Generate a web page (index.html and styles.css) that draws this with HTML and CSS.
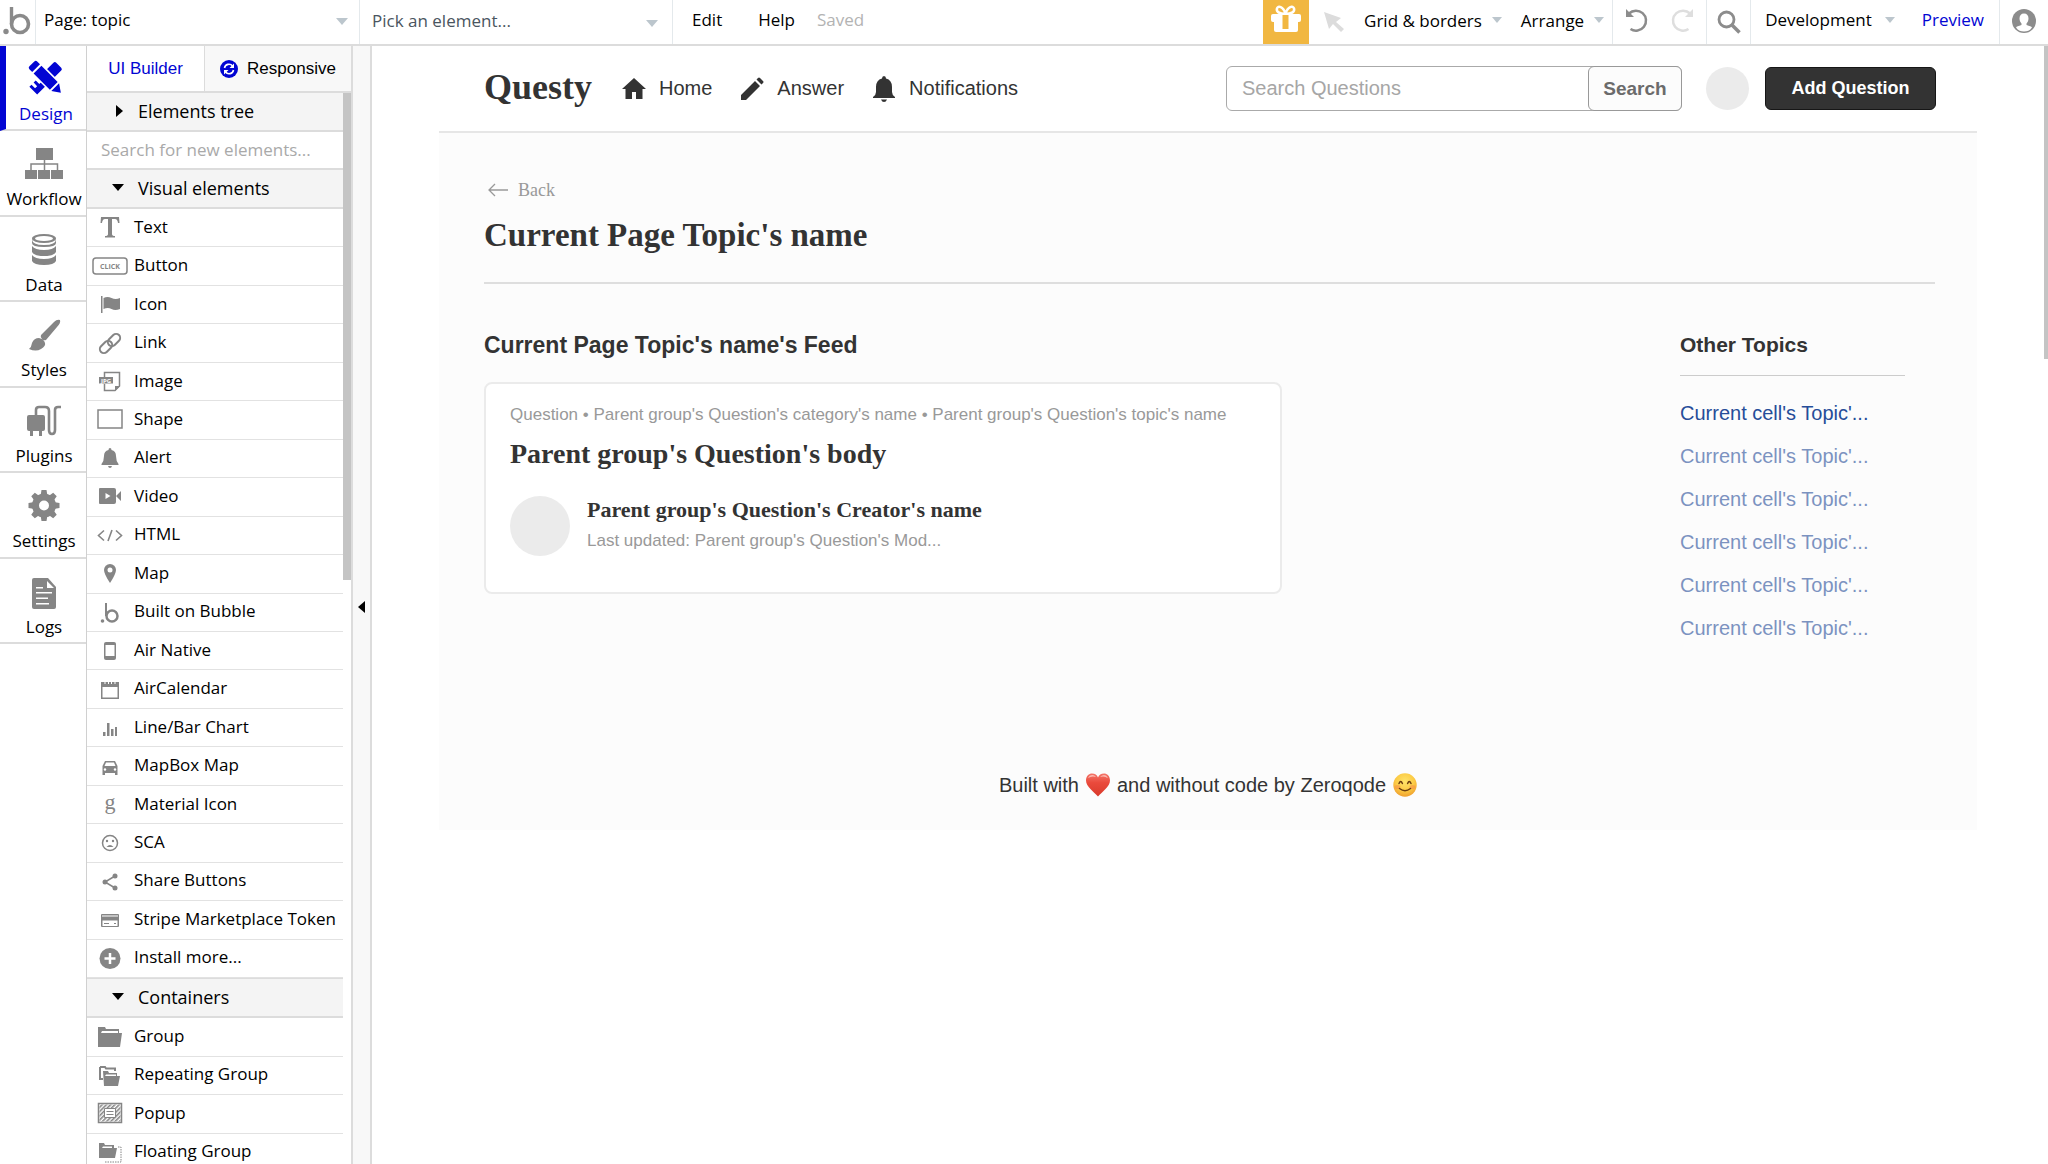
FILE: index.html
```html
<!DOCTYPE html>
<html lang="en">
<head>
    <meta charset="UTF-8">
    <meta name="viewport" content="width=device-width, initial-scale=1.0">
    <title>Page: topic</title>
    <link rel="stylesheet" href="styles.css">
</head>
<body>
    <header class="topbar">
        <a href="#" class="logo" aria-label="Bubble">
            <svg width="28" height="30" viewBox="0 0 28 30"><path d="M8.500 2v17" stroke="#8a8a8a" stroke-width="3.400" fill="none"/><circle cx="17" cy="19" r="8.500" fill="none" stroke="#8a8a8a" stroke-width="3.600"/><circle cx="3" cy="26.500" r="2.700" fill="#8a8a8a"/></svg>
        </a>
        <div class="picker page-picker">
            <select aria-label="Page"><option>Page: topic</option></select>
        </div>
        <div class="picker element-picker">
            <select aria-label="Element"><option>Pick an element...</option></select>
        </div>
        <nav class="menu">
            <button type="button">Edit</button>
            <button type="button">Help</button>
            <span class="saved">Saved</span>
        </nav>
        <button type="button" class="gift" aria-label="Gifts">
            <svg width="32" height="28" viewBox="0 0 32 28"><path d="M15.500 9C9 9 6 6.500 7 3.500s6-2.500 8.500 5C18 1 23 .500 24 3.500S22 9 15.500 9" fill="none" stroke="#fff" stroke-width="2.500"/><rect x="1" y="9" width="30" height="8" rx="2" fill="#fff"/><path d="M4 16h24v9q0 2-2 2H6q-2 0-2-2z" fill="#fff"/><path d="M12.500 10h6v14h-6z" fill="#f1b741"/></svg>
        </button>
        <button type="button" class="pointer" aria-label="Select">
            <svg width="22" height="22" viewBox="0 0 22 22"><path d="M1 1l17 6-5 4 8 7-3 3-8-8-4 5z" fill="#dcdcdc"/></svg>
        </button>
        <button type="button" class="drop grid-menu">Grid &amp; borders</button>
        <button type="button" class="drop arrange-menu">Arrange</button>
        <div class="history">
            <button type="button" aria-label="Undo">
                <svg width="24" height="24" viewBox="0 0 24 24"><path d="M4 5.500A10 10 0 1 1 5.500 21" fill="none" stroke="#8c8c8c" stroke-width="2.500"/><path d="M1 1v8h8z" fill="#8c8c8c"/></svg>
            </button>
            <button type="button" aria-label="Redo">
                <svg width="24" height="24" viewBox="0 0 24 24"><path d="M20 5.500A10 10 0 1 0 18.500 21" fill="none" stroke="#dedede" stroke-width="2.500"/><path d="M23 1v8h-8z" fill="#dedede"/></svg>
            </button>
        </div>
        <button type="button" class="find" aria-label="Search">
            <svg width="24" height="24" viewBox="0 0 24 24"><circle cx="9.500" cy="9.500" r="7.500" fill="none" stroke="#8c8c8c" stroke-width="2.800"/><path d="M15 15l7.500 7.500" stroke="#8c8c8c" stroke-width="3.500"/></svg>
        </button>
        <div class="deploy">
            <button type="button" class="drop">Development</button>
            <a href="#">Preview</a>
        </div>
        <a href="#" class="account" aria-label="Account">
            <svg width="24" height="24" viewBox="0 0 24 24"><circle cx="12" cy="12" r="12" fill="#8c8c8c"/><path d="M12 4.500c3 0 4.500 2 4.500 5 0 2-1 4-2 5v1.500c3 1 5 1.500 5.500 2.500-2 3-5 4-8 4s-6-1-8-4c.500-1 2.500-1.500 5.500-2.500v-1.500c-1-1-2-3-2-5 0-3 1.500-5 4.500-5z" fill="#fff"/></svg>
        </a>
    </header>

    <div class="workspace">
        <nav class="rail">
            <a href="#" class="active">
                <svg width="36" height="36" viewBox="0 0 36 36"><g fill="#0205d3"><path transform="rotate(45 18 18)" d="M12.500 2q0-2 2-2h7q2 0 2 2v34h-11v-3h5v-3h-5v-3h5v-3h-5z"/><path transform="rotate(-45 18 18)" d="M11 5h14v25H11z" fill="#fff"/><path transform="rotate(-45 18 18)" d="M12.500 6h11v23h-11zM12.500 31h11L18 39zM12.500 0q0-2 2-2h7q2 0 2 2v4h-11z"/></g></svg>
                Design
            </a>
            <a href="#">
                <svg width="38" height="36" viewBox="0 0 38 36"><path d="M11 3h17v12H11zM0 25h12v9H0zM13 25h12v9H13zM26 25h12v9H26z" fill="#858585"/><path d="M19.500 15v10M6 25v-6h26.500v6" fill="none" stroke="#858585" stroke-width="1.500"/></svg>
                Workflow
            </a>
            <a href="#">
                <svg width="26" height="36" viewBox="0 0 26 36"><g fill="#858585"><path d="M1 8q0 6 12 6t12-6v4q0 4-12 4T1 12z"/><ellipse cx="13" cy="7.500" rx="12" ry="4.500"/><path d="M1 15q3 4 12 4t12-4v6q-2 4-12 4T1 21zM1 24q3 4 12 4t12-4v6q-2 4-12 4T1 30z"/></g><ellipse cx="13" cy="7.500" rx="9" ry="2.500" fill="#fff"/></svg>
                Data
            </a>
            <a href="#">
                <svg width="34" height="36" viewBox="0 0 34 36"><path d="M33 4q-3-1-6 2L14 19q-1 2 1 4t4 1L30 11q4-4 3-7zM12 22q-5 0-7 5-.500 4-3 6 7 3 12 0 5-3 4-6-1-4-6-5z" fill="#858585"/></svg>
                Styles
            </a>
            <a href="#">
                <svg width="36" height="36" viewBox="0 0 36 36"><path d="M3 13h14q2 0 2 2v12q0 2-2 2h-1v5h-3v-5H7v5H4v-5H3q-2 0-2-2V15q0-2 2-2z" fill="#858585"/><path d="M10 14V8q0-3 3-3h6q4 0 4 4v19q0 4 3 4t3-4V8q0-3 3-3h3" fill="none" stroke="#858585" stroke-width="2.600"/></svg>
                Plugins
            </a>
            <a href="#">
                <svg width="32" height="36" viewBox="0 0 32 36"><g fill="#858585"><path d="M12.500 9l1-6h5l1 6zM12.500 28l1 6h5l1-6z"/><path d="M12.500 9l1-6h5l1 6zM12.500 28l1 6h5l1-6z" transform="rotate(45 16 18.500)"/><path d="M12.500 9l1-6h5l1 6zM12.500 28l1 6h5l1-6z" transform="rotate(90 16 18.500)"/><path d="M12.500 9l1-6h5l1 6zM12.500 28l1 6h5l1-6z" transform="rotate(135 16 18.500)"/></g><circle cx="16" cy="18.500" r="8.500" fill="none" stroke="#858585" stroke-width="7"/></svg>
                Settings
            </a>
            <a href="#">
                <svg width="24" height="36" viewBox="0 0 24 36"><path d="M2 5h14l8 9v20q0 2-2 2H2q-2 0-2-2V7q0-2 2-2z" fill="#858585"/><path d="M15 8v7h7zM4 14h7v1.500H4zM4 19h16v1.500H4zM4 24.500h12V26H4zM4 30h13v1.500H4z" fill="#fff"/></svg>
                Logs
            </a>
        </nav>

        <aside class="panel">
            <div class="tabs">
                <button type="button" class="tab active">UI Builder</button>
                <button type="button" class="tab">
                    <svg width="18" height="18" viewBox="0 0 18 18"><circle cx="9" cy="9" r="9" fill="#0205d3"/><path d="M4.500 8a4.500 4.500 0 0 1 8-2M13.500 10a4.500 4.500 0 0 1-8 2" fill="none" stroke="#fff" stroke-width="1.600"/><path d="M14 3.500V8H9.500zM4 14.500V10h4.500z" fill="#fff"/></svg>
                    Responsive
                </button>
            </div>
            <div class="panel-body">
                <div class="palette">
                    <button type="button" class="section closed">Elements tree</button>
                    <input type="text" class="element-search" placeholder="Search for new elements..." aria-label="Search for new elements">
                    <button type="button" class="section">Visual elements</button>
                    <ul class="visual-list">
                        <li><svg viewBox="0 0 36 24"><path d="M9 2h18l.500 6h-1.500q-.500-4-3-4h-3v15q0 2 3 2v1.500H13V21q3 0 3-2V4h-3q-2.500 0-3 4H8.500z"/></svg>Text</li>
                        <li><svg viewBox="0 0 36 24"><rect x="1" y="4" width="34" height="16" rx="3" fill="#fff" stroke="#858585" stroke-width="1.500"/><text x="18" y="15" class="click">CLICK</text></svg>Button</li>
                        <li><svg viewBox="0 0 36 24"><path d="M9 4h1.500v17H9zM11.500 6q4-2 8 0t8.500 0v11q-5 2-8.500 0t-8 0z"/></svg>Icon</li>
                        <li><svg viewBox="0 0 36 24"><g fill="none" stroke="#858585" stroke-width="2"><rect x="-7" y="-4" width="14" height="8" rx="4" transform="translate(22 9) rotate(-45)"/><rect x="-7" y="-4" width="14" height="8" rx="4" transform="translate(14 16) rotate(-45)"/></g></svg>Link</li>
                        <li><svg viewBox="0 0 36 24"><path d="M12.500 8V3.500h15V17L23 21.500H12.500V15" fill="none" stroke="#858585" stroke-width="1.500"/><path d="M23 22v-5h5zM7 8h14v6.500H7z"/><text x="14" y="13.500" class="jpg">JPG</text></svg>Image</li>
                        <li><svg viewBox="0 0 36 24"><rect x="6" y="3" width="24" height="18" fill="#fff" stroke="#858585" stroke-width="1.500"/></svg>Shape</li>
                        <li><svg viewBox="0 0 36 24"><path d="M18 2q1.500 0 1.500 2 4.500 1 4.500 6 0 5 2.500 8v1h-17v-1q2.500-3 2.500-8 0-5 4.500-6 0-2 1.500-2zM16 20h4q-.500 2-2 2t-2-2z"/></svg>Alert</li>
                        <li><svg viewBox="0 0 36 24"><path d="M8 4h14q2 0 2 2v12q0 2-2 2H8q-1 0-1-1V5q0-1 1-1zM24 12l5-5v10z"/><path d="M13.500 9v6l5-3z" fill="#fff"/></svg>Video</li>
                        <li><svg viewBox="0 0 36 24"><path d="M12 7.500L6.500 12.500l5.500 5M24 7.500l5.500 5-5.500 5M20 7l-4 11" fill="none" stroke="#858585" stroke-width="1.600"/></svg>HTML</li>
                        <li><svg viewBox="0 0 36 24"><path d="M18 3a6 6 0 0 1 6 6q0 4-6 13-6-9-6-13a6 6 0 0 1 6-6z"/><circle cx="18" cy="9" r="2.500" fill="#fff"/></svg>Map</li>
                        <li><svg viewBox="0 0 36 24"><path d="M14 3v13" stroke="#858585" stroke-width="2"/><circle cx="20" cy="16" r="5.500" fill="none" stroke="#858585" stroke-width="2.500"/><circle cx="10.500" cy="21" r="1.800"/></svg>Built on Bubble</li>
                        <li><svg viewBox="0 0 36 24"><path d="M14 4h8q2 0 2 2v14q0 2-2 2h-8q-2 0-2-2V6q0-2 2-2z"/><path d="M13.500 7h9v11h-9z" fill="#fff"/></svg>Air Native</li>
                        <li><svg viewBox="0 0 36 24"><path d="M9 5h18v17H9z"/><path d="M10.500 10h15v10.500h-15z" fill="#fff"/><path d="M13 4v3M23 4v3M16.500 4v3M19.500 4v3" stroke="#fff" stroke-width="1"/></svg>AirCalendar</li>
                        <li><svg viewBox="0 0 36 24"><path d="M11 17h2.500v4H11zM15 8h2.500v13H15zM19 14h2.500v7H19zM23 12h2v9h-2z"/></svg>Line/Bar Chart</li>
                        <li><svg viewBox="0 0 36 24"><path d="M13 7h10l2.500 5v9H23v-2H13v2h-2.500v-9z"/><path d="M14 8.500h8l1.500 3.500h-11z" fill="#fff"/><circle cx="13" cy="15.500" r="1.200" fill="#fff"/><circle cx="23" cy="15.500" r="1.200" fill="#fff"/></svg>MapBox Map</li>
                        <li><svg viewBox="0 0 36 24"><text x="18" y="17" class="letter-g">g</text></svg>Material Icon</li>
                        <li><svg viewBox="0 0 36 24"><circle cx="18" cy="13" r="7.500" fill="none" stroke="#858585" stroke-width="1.500"/><circle cx="15" cy="11" r="1.200"/><circle cx="21" cy="11" r="1.200"/><path d="M14.500 17q3.500-4 7 0z"/></svg>SCA</li>
                        <li><svg viewBox="0 0 36 24"><path d="M23 7l-10 6 10 6" fill="none" stroke="#858585" stroke-width="1.500"/><circle cx="23" cy="7" r="2.500"/><circle cx="13" cy="13" r="2.500"/><circle cx="23" cy="19" r="2.500"/></svg>Share Buttons</li>
                        <li><svg viewBox="0 0 36 24"><rect x="9" y="7" width="18" height="13" rx="1"/><path d="M10 8.500h16V9.500H10zM10.500 13.500h15V19h-15z" fill="#fff"/><path d="M12 16h5v1h-5zM22 16h2v1h-2z"/></svg>Stripe Marketplace Token</li>
                        <li><svg viewBox="0 0 36 24"><circle cx="18" cy="12.500" r="10.500"/><path d="M18 7v11M12.500 12.500h11" stroke="#fff" stroke-width="2.500"/></svg>Install more...</li>
                    </ul>
                    <button type="button" class="section">Containers</button>
                    <ul class="container-list">
                        <li><svg viewBox="0 0 36 24"><path d="M6 3h7l1 2h13v4h3l-2 14H6z"/><path d="M9 9l1-2h16v2z" fill="#fff"/></svg>Group</li>
                        <li><svg viewBox="0 0 36 24"><path d="M8 4h5l1 1.500h9V8M8 4v12h3" fill="none" stroke="#858585" stroke-width="2"/><path d="M11 8h5l1 2h8v3h3l-2 10H12z"/><path d="M13 13l1-1.500h10V13z" fill="#fff"/></svg>Repeating Group</li>
                        <li><svg viewBox="0 0 36 24"><defs><pattern id="hatch" width="3" height="3" patternUnits="userSpaceOnUse" patternTransform="rotate(45)"><path d="M0 0h1.600v3H0z" fill="#858585"/></pattern></defs><rect x="6.500" y="2.500" width="23" height="19" fill="#fff" stroke="#858585" stroke-width="1.500"/><rect x="7.500" y="3.500" width="21" height="17" fill="url(#hatch)"/><path d="M12.500 7.500h11v9h-11z" fill="#fff" stroke="#858585"/><path d="M14.500 10.500h7M14.500 13.500h7" stroke="#858585"/></svg>Popup</li>
                        <li><svg viewBox="0 0 36 24"><path d="M7 3h5l1 2h9v3h3l-2 10H7z"/><path d="M10 8l1-1.500h9V8z" fill="#fff"/><path d="M26 7h3v15H13" fill="none" stroke="#858585" stroke-dasharray="1.500 1"/></svg>Floating Group</li>
                    </ul>
                </div>
                <div class="scrollbar"></div>
            </div>
        </aside>

        <button type="button" class="collapse" aria-label="Collapse panel"></button>

        <main class="canvas">
            <div class="page">
                <header class="site-header">
                    <a href="#" class="brand">Questy</a>
                    <nav class="site-nav">
                        <a href="#"><svg width="24" height="24" viewBox="0 0 24 24"><path d="M12 1l12 11h-3.500v10H14v-7h-4v7H3.500V12H0z"/></svg>Home</a>
                        <a href="#"><svg width="24" height="24" viewBox="0 0 24 24"><path d="M1 18L15 4l5 5L6 23H1zM16.500 2.500L18 1q1-1 2 0l3 3q1 1 0 2l-1.500 1.500z"/></svg>Answer</a>
                        <a href="#"><svg width="24" height="26" viewBox="0 0 24 26"><path d="M12 0q2 0 2 2.500 6 1.500 6 8.500v5q0 3 3 5v1H1v-1q3-2 3-5v-5q0-7 6-8.500Q10 0 12 0zM9 23.500h6q-1 2.500-3 2.500t-3-2.500z"/></svg>Notifications</a>
                    </nav>
                    <form class="site-search">
                        <input type="text" placeholder="Search Questions" aria-label="Search Questions">
                        <button type="button">Search</button>
                    </form>
                    <div class="avatar"></div>
                    <button type="button" class="add-question">Add Question</button>
                </header>

                <div class="content">
                    <a href="#" class="back"><svg width="20" height="12" viewBox="0 0 20 12"><path d="M20 6H1M7 0L1 6l6 6" fill="none" stroke="#999" stroke-width="1.300"/></svg>Back</a>
                    <h1>Current Page Topic's name</h1>
                    <div class="columns">
                        <section class="feed">
                            <h2>Current Page Topic's name's Feed</h2>
                            <article class="card">
                                <p class="meta">Question • Parent group's Question's category's name • Parent group's Question's topic's name</p>
                                <h3>Parent group's Question's body</h3>
                                <div class="author">
                                    <div class="avatar large"></div>
                                    <div>
                                        <h4>Parent group's Question's Creator's name</h4>
                                        <p class="meta">Last updated: Parent group's Question's Mod...</p>
                                    </div>
                                </div>
                            </article>
                        </section>
                        <aside class="topics">
                            <h2>Other Topics</h2>
                            <ul>
                                <li><a href="#">Current cell's Topic'...</a></li>
                                <li><a href="#">Current cell's Topic'...</a></li>
                                <li><a href="#">Current cell's Topic'...</a></li>
                                <li><a href="#">Current cell's Topic'...</a></li>
                                <li><a href="#">Current cell's Topic'...</a></li>
                                <li><a href="#">Current cell's Topic'...</a></li>
                            </ul>
                        </aside>
                    </div>
                </div>

                <footer class="site-footer">
                    Built with
                    <svg width="24" height="24" viewBox="0 0 24 24" role="img" aria-label="love"><defs><linearGradient id="heart" x1="0" y1="0" x2="0" y2="1"><stop offset="0" stop-color="#f4766a"/><stop offset=".4" stop-color="#ea4a3c"/><stop offset="1" stop-color="#d93a2b"/></linearGradient></defs><path d="M12 23.500C8 19 0 13.500 0 7.500 0 3 3 .500 6 .500c3 0 5 1.500 6 4 1-2.500 3-4 6-4s6 2.500 6 7c0 6-8 11.500-12 16z" fill="url(#heart)"/><path d="M2 5q1.500-3.500 5-3 2 .500 3 2-4-1.500-8 1zM14 4q3-3 6-1.500 1.500 1 2 2.500-4-2.500-8-1z" fill="#fbb8b0"/></svg>
                    and without code by Zeroqode
                    <svg width="24" height="24" viewBox="0 0 24 24" role="img" aria-label="smile"><defs><radialGradient id="face" cx=".5" cy=".35" r=".65"><stop offset="0" stop-color="#ffe46a"/><stop offset=".6" stop-color="#fccb45"/><stop offset="1" stop-color="#efa02f"/></radialGradient></defs><circle cx="12" cy="12" r="11.700" fill="url(#face)"/><ellipse cx="4.500" cy="14" rx="3" ry="2" fill="#f6934a" opacity=".6"/><ellipse cx="19.500" cy="14" rx="3" ry="2" fill="#f6934a" opacity=".6"/><path d="M6 10.500q1.700-4 3.400 0M14.600 10.500q1.700-4 3.400 0M6.500 15.500q5.500 4.500 11 0" fill="none" stroke="#6b3d10" stroke-width="1.500" stroke-linecap="round"/></svg>
                </footer>
            </div>
            <div class="canvas-scrollbar"></div>
        </main>
    </div>
</body>
</html>
```
FILE: styles.css
```css
* {
    box-sizing: border-box;
}
body {
    margin: 0;
    height: 100vh;
    overflow: hidden;
    display: flex;
    flex-direction: column;
    background: #fff;
    color: #000;
    font-family: "Open Sans", sans-serif;
    font-size: 17px;
}
a {
    color: inherit;
    text-decoration: none;
}
button, input, select {
    font: inherit;
    color: inherit;
    background: none;
    border: none;
    padding: 0;
    margin: 0;
    outline: none;
}
button {
    cursor: pointer;
}
ul {
    list-style: none;
    margin: 0;
    padding: 0;
}
h1, h2, h3, h4, p {
    margin: 0;
}
svg {
    display: block;
    flex: none;
    overflow: visible;
}

/* top bar */
.topbar {
    display: flex;
    flex: none;
    height: 46px;
    border-bottom: 2px solid #dcdcdc;
}
.topbar > * {
    display: flex;
    align-items: center;
}
.logo {
    width: 36px;
    padding: 0 0 4px 3px;
    border-right: 1px solid #e4e9ec;
}
.picker {
    position: relative;
    border-right: 1px solid #e4e9ec;
}
.picker select {
    appearance: none;
    width: 100%;
    height: 100%;
    padding: 0 32px 6px 8px;
}
.picker::after {
    content: "";
    position: absolute;
    right: 11px;
    top: 18px;
    border: 6px solid transparent;
    border-top: 7px solid #bcc6cd;
    border-bottom: none;
}
.page-picker {
    width: 324px;
}
.element-picker {
    width: 313px;
    color: #4a5560;
}
.element-picker select {
    padding-left: 12px;
    padding-bottom: 4px;
}
.element-picker::after {
    right: 14px;
    top: 20px;
}
.menu {
    flex: 1;
    gap: 36px;
    padding: 0 0 6px 19px;
}
.saved {
    margin-left: -14px;
    color: #b3b3b3;
}
.gift {
    width: 46px;
    justify-content: center;
    padding-bottom: 6px;
    background: #f1b741;
}
.pointer {
    width: 55px;
    justify-content: center;
    padding-right: 6px;
}
.drop {
    display: flex;
    align-items: center;
    gap: 10px;
    padding-bottom: 4px;
}
.drop::after {
    content: "";
    border: 5px solid transparent;
    border-top: 6px solid #bcc6cd;
    border-bottom: none;
}
.grid-menu {
    padding-right: 19px;
}
.arrange-menu {
    padding-right: 8px;
}
.history {
    gap: 21px;
    padding: 0 12px 4px;
    border-left: 1px solid #e4e9ec;
    border-right: 1px solid #e4e9ec;
}
.find {
    width: 44px;
    justify-content: center;
    border-right: 1px solid #e4e9ec;
}
.deploy {
    gap: 27px;
    padding: 0 15px 5px 14px;
    border-right: 1px solid #e4e9ec;
}
.deploy .drop {
    gap: 13px;
    padding-bottom: 0;
}
.deploy a {
    color: #0205d3;
}
.account {
    width: 48px;
    padding: 0 0 2px 12px;
}

.workspace {
    flex: 1;
    display: flex;
    min-height: 0;
}

/* main section rail */
.rail {
    flex: none;
    display: flex;
    flex-direction: column;
    width: 86px;
    height: 598px;
    line-height: 24px;
}
.rail a {
    flex: 1;
    display: flex;
    flex-direction: column;
    align-items: center;
    gap: 6px;
    padding: 14px 0 0 2px;
    border-bottom: 2px solid #dcdcdc;
}
.rail .active {
    padding-left: 0;
    color: #0205d3;
    border-left: 6px solid #0205d3;
}

/* element palette */
.panel {
    flex: none;
    display: flex;
    flex-direction: column;
    width: 267px;
    border-left: 1px solid #d0d0d0;
    border-right: 2px solid #dcdcdc;
}
.tabs {
    flex: none;
    display: flex;
    height: 47px;
    border-bottom: 2px solid #dcdcdc;
    font-family: "Liberation Sans", sans-serif;
}
.tab {
    flex: 1;
    display: flex;
    align-items: center;
    justify-content: center;
    gap: 9px;
    background: #f8f8f8;
}
.tab.active {
    flex: none;
    width: 118px;
    background: #fff;
    border-right: 1px solid #dcdcdc;
    color: #0205d3;
}
.panel-body {
    flex: 1;
    display: flex;
    min-height: 0;
}
.palette {
    flex: 1;
    overflow: hidden;
}
.section {
    display: flex;
    align-items: center;
    gap: 14px;
    width: 100%;
    height: 39px;
    padding: 0 0 2px 25px;
    border-bottom: 2px solid #dcdcdc;
    background: #f4f4f4;
    font-size: 18px;
}
.section::before {
    content: "";
    border: 6px solid transparent;
    border-top: 7px solid #000;
    border-bottom: none;
}
.section.closed::before {
    margin: 0 1px 0 4px;
    border: 6px solid transparent;
    border-left: 7px solid #000;
    border-right: none;
}
.element-search {
    display: block;
    width: 100%;
    height: 38px;
    padding: 0 0 2px 14px;
    border-bottom: 2px solid #dcdcdc;
}
.element-search::placeholder {
    color: #a9a9a9;
    opacity: 1;
}
.palette ul {
    display: flex;
    flex-direction: column;
}
.visual-list {
    height: 770px;
    border-bottom: 1px solid #dcdcdc;
}
.container-list {
    height: 154px;
}
.palette li {
    flex: 1;
    display: flex;
    align-items: center;
    gap: 6px;
    padding: 0 0 3px 5px;
    border-bottom: 1px solid #e2e2e2;
    white-space: nowrap;
}
.palette li svg {
    width: 36px;
    height: 24px;
    margin-top: 2px;
    fill: #858585;
}
.click {
    font: bold 7px "Open Sans", sans-serif;
    text-anchor: middle;
}
.jpg {
    font: bold 6px "Open Sans", sans-serif;
    text-anchor: middle;
    fill: #fff;
}
.letter-g {
    font: 22px "Liberation Serif", serif;
    text-anchor: middle;
}
.scrollbar {
    width: 8px;
    height: 487px;
    background: #c4c4c4;
}
.collapse {
    flex: none;
    display: flex;
    align-items: center;
    width: 19px;
    padding: 4px 0 0 5px;
    background: #f8f8f8;
    border-right: 2px solid #dcdcdc;
}
.collapse::before {
    content: "";
    border: 6px solid transparent;
    border-right: 7px solid #000;
    border-left: none;
}

/* page being edited */
.canvas {
    flex: 1;
    display: flex;
    align-items: flex-start;
    font-family: "Liberation Sans", sans-serif;
    color: #333;
}
.canvas-scrollbar {
    width: 4px;
    height: 313px;
    background: #c4c4c4;
}
.page {
    flex: 1;
    margin: 0 67px;
    background: #fcfcfc;
}
.site-header {
    display: flex;
    align-items: center;
    height: 87px;
    padding: 0 41px 0 45px;
    border-bottom: 2px solid #e6e6e6;
    background: #fff;
    font-size: 20px;
}
.brand {
    padding-bottom: 4px;
    font: bold 36px "Liberation Serif", serif;
}
.site-nav {
    flex: 1;
    display: flex;
    gap: 28px;
    padding-left: 30px;
}
.site-nav a {
    display: flex;
    align-items: center;
    gap: 13px;
}
.site-nav svg {
    fill: #333;
}
.site-search {
    display: flex;
    width: 456px;
    height: 45px;
    border: 1px solid #aaa;
    border-radius: 6px;
}
.site-search input {
    flex: 1;
    min-width: 0;
    padding-left: 15px;
}
.site-search input::placeholder {
    color: #a6a6a6;
    opacity: 1;
}
.site-search button {
    width: 94px;
    margin: -1px;
    border: 1px solid #999;
    border-radius: 6px;
    background: #fcfcfc;
    font-size: 19px;
    font-weight: bold;
    color: #6b6b6b;
}
.avatar {
    flex: none;
    width: 43px;
    height: 43px;
    margin: 0 16px 0 24px;
    border-radius: 50%;
    background: #ebebeb;
}
.avatar.large {
    width: 60px;
    height: 60px;
    margin: 0;
}
.add-question {
    width: 171px;
    height: 43px;
    border: 1px solid #161616;
    border-radius: 6px;
    background: #333;
    color: #fff;
    font-size: 18px;
    font-weight: bold;
}
.content {
    padding: 44px 42px 0 45px;
}
.back {
    display: inline-flex;
    align-items: center;
    gap: 10px;
    padding-left: 4px;
    font: 18px/26px "Liberation Serif", serif;
    color: #999;
}
h1 {
    padding: 12px 0 27px;
    border-bottom: 2px solid #dedede;
    font: bold 33px/40px "Liberation Serif", serif;
}
.columns {
    display: flex;
    justify-content: space-between;
    padding-top: 48px;
}
.feed {
    width: 798px;
}
h2 {
    font-size: 23px;
    line-height: 26px;
}
.card {
    height: 212px;
    margin-top: 24px;
    padding: 19px 24px;
    border: 2px solid #ebebeb;
    border-radius: 8px;
    background: #fff;
}
.meta {
    font-size: 17px;
    line-height: 24px;
    color: #999;
}
h3 {
    margin-top: 10px;
    font: bold 28px/34px "Liberation Serif", serif;
}
.author {
    display: flex;
    gap: 17px;
    margin-top: 25px;
}
h4 {
    margin-bottom: 5px;
    font: bold 22px/28px "Liberation Serif", serif;
}
.topics {
    width: 255px;
}
.topics h2 {
    font-size: 21px;
    padding-bottom: 17px;
    margin-right: 30px;
    border-bottom: 1px solid #ccc;
}
.topics ul {
    display: grid;
    gap: 17px;
    padding-top: 24px;
    font-size: 20px;
    line-height: 26px;
}
.topics li {
    opacity: 0.6;
    color: #264d99;
}
.topics li:first-child {
    opacity: 1;
}
.site-footer {
    display: flex;
    align-items: center;
    justify-content: center;
    gap: 7px;
    height: 90px;
    margin-top: 99px;
    font-size: 20px;
}
```
